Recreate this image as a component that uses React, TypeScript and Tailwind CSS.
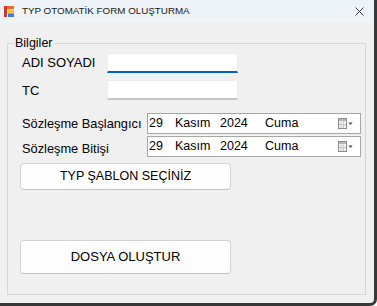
import React from 'react';

const font = { fontFamily: '"Liberation Sans", Arial, sans-serif' };

const AppIcon = () => (
    <svg width="10" height="11" viewBox="0 0 10 11">
        <rect x="0" y="0" width="10" height="11" fill="#f4f4f4" />
        <rect x="0" y="0" width="3" height="11" fill="#d9342b" />
        <rect x="3" y="0" width="7" height="3" fill="#e86a2c" />
        <rect x="4" y="3.5" width="6" height="4" fill="#f5c230" />
        <rect x="4" y="7.5" width="6" height="3.5" fill="#3b78d8" />
    </svg>
);

const CalendarDrop = () => (
    <svg width="15" height="11" viewBox="0 0 15 11">
        <rect x="0.5" y="0.5" width="8" height="10" fill="#f2f2f2" stroke="#8c8c8c" />
        <rect x="1" y="1" width="7" height="2" fill="#b8b8b8" />
        <line x1="3" y1="3.5" x2="3" y2="10" stroke="#c8c8c8" />
        <line x1="5.5" y1="3.5" x2="5.5" y2="10" stroke="#c8c8c8" />
        <line x1="1" y1="6.5" x2="8" y2="6.5" stroke="#c8c8c8" />
        <path d="M10.5 4.5 L14.5 4.5 L12.5 7 Z" fill="#3c4a5c" />
    </svg>
);

const DateBox = () => (
    <div className="flex items-center w-[214px] h-[21px] bg-white border border-[#a6a6a6] pl-[1px] pr-[7px] text-[12.5px] text-black">
        <span className="w-[26px]">29</span>
        <span className="w-[45px]">Kasım</span>
        <span className="w-[45px]">2024</span>
        <span>Cuma</span>
        <span className="ml-auto flex items-center">
            <CalendarDrop />
        </span>
    </div>
);

export default function App() {
    return (
        <div
            className="w-[377px] h-[306px] bg-[#f0f0f0] border-r-[3px] border-b-[3px] border-[#383838] rounded-br-[7px] overflow-hidden flex flex-col"
            style={font}
        >
            {/* title bar */}
            <div className="h-[23px] bg-[#eef3f8] flex items-center pl-[4px] shrink-0">
                <AppIcon />
                <span className="ml-[8px] text-[9.8px] text-[#1a1a1a]">TYP OTOMATİK FORM OLUŞTURMA</span>
                <svg className="ml-auto mr-[10px]" width="9" height="9" viewBox="0 0 9 9">
                    <path d="M0.5 0.5 L8.5 8.5 M8.5 0.5 L0.5 8.5" stroke="#333" strokeWidth="1" />
                </svg>
            </div>

            {/* group box */}
            <fieldset className="ml-[7px] mt-[13px] w-[359px] border border-[#d6d6d6] pb-[20px]">
                <legend className="ml-[6px] px-[1px] text-[12.5px] leading-[14px] text-black">Bilgiler</legend>

                <div className="flex items-center mt-[3px] pl-[14px]">
                    <span className="w-[85px] text-[13px] text-black">ADI SOYADI</span>
                    <div className="w-[131px] h-[20px] bg-white border border-[#ececec] border-b-2 border-b-[#005fc4]" />
                </div>

                <div className="flex items-center mt-[7px] pl-[14px]">
                    <span className="w-[85px] text-[13px] text-black translate-y-[1px]">TC</span>
                    <div className="w-[131px] h-[20px] bg-white border border-[#ececec] border-b-2 border-b-[#c6c6c6]" />
                </div>

                <div className="flex items-center mt-[13px] pl-[14px]">
                    <span className="w-[125px] text-[12.8px] text-black">Sözleşme Başlangıcı</span>
                    <DateBox />
                </div>

                <div className="flex items-center mt-[2px] pl-[14px]">
                    <span className="w-[125px] text-[12.8px] text-black translate-y-[2px]">Sözleşme Bitişi</span>
                    <DateBox />
                </div>

                <div className="pl-[12px] mt-[6px]">
                    <button className="w-[211px] h-[27px] bg-[#fdfdfd] border border-[#d3d3d3] border-b-[#c4c4c4] rounded-[4px] text-[12.5px] text-black">
                        TYP ŞABLON SEÇİNİZ
                    </button>
                </div>

                <div className="pl-[12px] mt-[50px]">
                    <button className="w-[211px] h-[34px] bg-[#fdfdfd] border border-[#d3d3d3] border-b-[#c4c4c4] rounded-[4px] text-[13px] text-black">
                        DOSYA OLUŞTUR
                    </button>
                </div>
            </fieldset>
        </div>
    );
}
